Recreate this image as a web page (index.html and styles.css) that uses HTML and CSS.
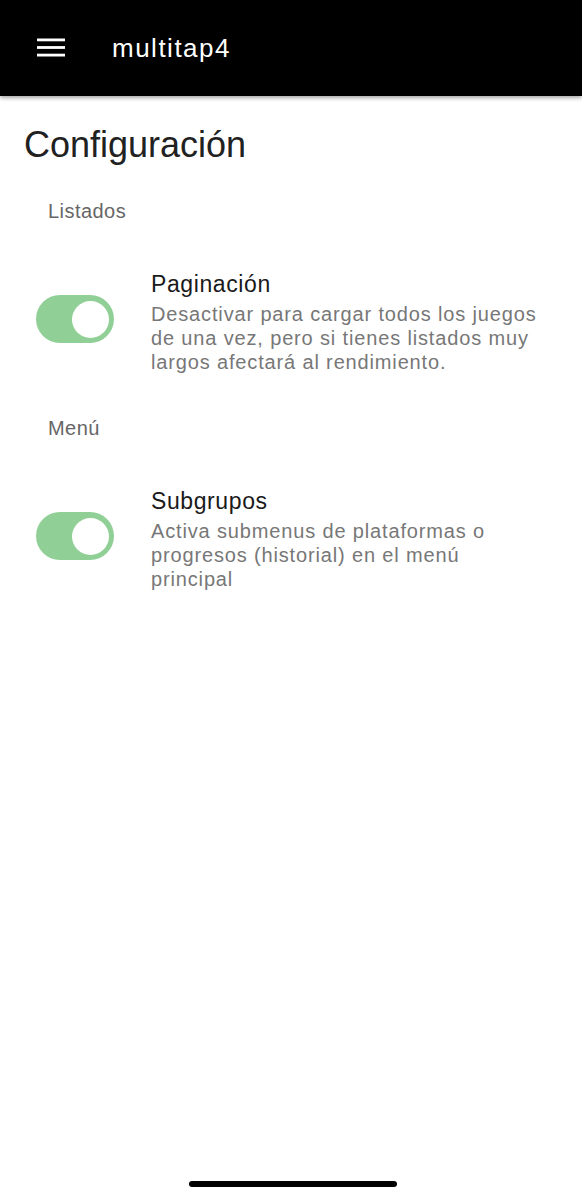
FILE: index.html
```html
<!DOCTYPE html>
<html lang="es">
<head>
<meta charset="utf-8">
<title>multitap4</title>
<link rel="stylesheet" href="styles.css">
</head>
<body>
<header class="appbar">
  <svg class="menu-icon" width="28" height="20" viewBox="0 0 28 20" aria-hidden="true">
    <rect x="0" y="0.5" width="28" height="2.8" fill="#fff"/>
    <rect x="0" y="8.1" width="28" height="2.8" fill="#fff"/>
    <rect x="0" y="15.7" width="28" height="2.8" fill="#fff"/>
  </svg>
  <span class="app-title">multitap4</span>
</header>
<main class="content">
  <h1 class="page-title">Configuración</h1>

  <section class="group">
    <div class="group-label">Listados</div>
    <div class="setting">
      <div class="toggle on"><span class="knob"></span></div>
      <div class="setting-text">
        <div class="setting-title">Paginación</div>
        <div class="setting-desc">Desactivar para cargar todos los juegos de una vez, pero si tienes listados muy largos afectará al rendimiento.</div>
      </div>
    </div>
  </section>

  <section class="group">
    <div class="group-label">Menú</div>
    <div class="setting">
      <div class="toggle on"><span class="knob"></span></div>
      <div class="setting-text">
        <div class="setting-title">Subgrupos</div>
        <div class="setting-desc">Activa submenus de plataformas o progresos (historial) en el menú principal</div>
      </div>
    </div>
  </section>
</main>
<div class="home-indicator"></div>
</body>
</html>
```
FILE: styles.css
```css
html, body {
  margin: 0;
  padding: 0;
  background: #fff;
}
body {
  font-family: "Liberation Sans", Arial, Helvetica, sans-serif;
  min-height: 1200px;
}
.appbar {
  height: 96px;
  background: #000;
  display: flex;
  align-items: center;
  padding-left: 37px;
  box-shadow: 0 2px 4px rgba(0, 0, 0, 0.35);
  position: relative;
  z-index: 1;
}
.menu-icon {
  display: block;
  flex: none;
}
.app-title {
  color: #fff;
  font-size: 26px;
  letter-spacing: 1.5px;
  margin-left: 47px;
  line-height: normal;
}
.content {
  padding: 27px 0 0 24px;
}
.page-title {
  margin: 0;
  font-size: 36px;
  line-height: 44px;
  font-weight: normal;
  color: #212121;
}
.group {
  padding-top: 32px;
}
.group + .group {
  padding-top: 42px;
}
.group-label {
  margin-left: 24px;
  font-size: 20px;
  line-height: 24px;
  letter-spacing: 0.45px;
  color: #666;
}
.setting {
  display: flex;
  align-items: flex-start;
  margin-top: 46px;
  padding-left: 12px;
}
.toggle {
  flex: none;
  width: 78px;
  height: 48px;
  border-radius: 24px;
  background: #ccc;
  margin-top: 26px;
  display: flex;
  align-items: center;
  padding: 0 5px;
  box-sizing: border-box;
}
.toggle.on {
  background: #90cf95;
  justify-content: flex-end;
}
.knob {
  width: 37px;
  height: 37px;
  border-radius: 50%;
  background: #fff;
}
.setting-text {
  margin-left: 37px;
  width: 392px;
}
.setting-title {
  font-size: 23px;
  line-height: 30px;
  letter-spacing: 0.6px;
  color: #1a1a1a;
}
.setting-desc {
  margin-top: 3px;
  font-size: 20px;
  line-height: 24px;
  letter-spacing: 0.85px;
  color: #777;
}
.home-indicator {
  position: fixed;
  left: 189px;
  bottom: 13px;
  width: 208px;
  height: 6px;
  border-radius: 3px;
  background: #000;
}
```
